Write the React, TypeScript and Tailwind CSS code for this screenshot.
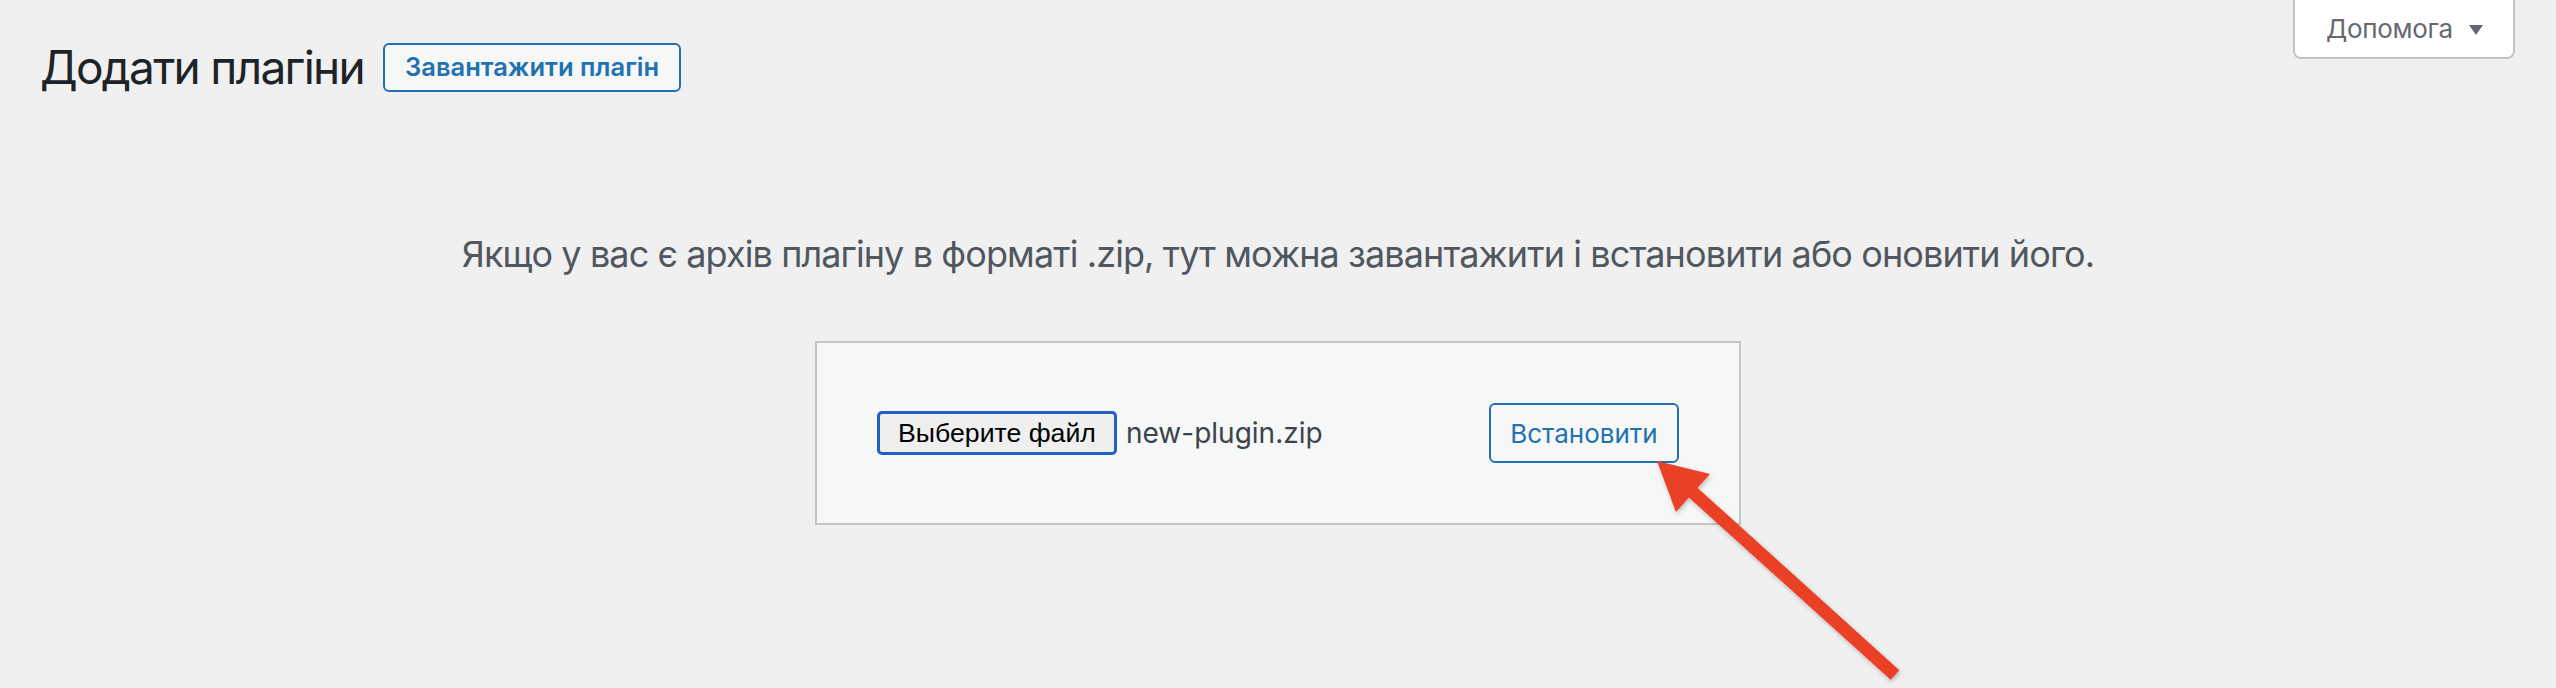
import React from "react";

export default function App() {
  return (
    <div
      className="relative min-h-[688px] w-full overflow-hidden bg-[#f0f0f1]"
      style={{ fontFamily: "Inter, 'Noto Sans', sans-serif" }}
    >
      <div className="flex items-start justify-between">
        <div className="flex items-center gap-[19px] pl-[40px] pt-[43px]">
          <h1 className="text-[46px] leading-[49px] font-normal tracking-[-0.037em] text-[#1d2327]">Додати плагіни</h1>
          <button className="flex h-[49px] w-[298px] items-center justify-center rounded-[6px] border-2 border-[#2271b1] bg-[#f6f7f7] text-[25.5px] font-semibold text-[#2271b1]">
            Завантажити плагін
          </button>
        </div>
        <button className="mr-[41px] flex h-[59px] w-[222px] items-center rounded-b-[8px] border-2 border-t-0 border-[#c3c4c7] bg-white pl-[31px] text-[26px] tracking-[-0.012em] text-[#646970]">
          <span>Допомога</span>
          <svg width="14" height="10" viewBox="0 0 14 10" className="ml-[16px] mt-[2px]">
            <path d="M0 0 H14 L7 10 Z" fill="#646970" />
          </svg>
        </button>
      </div>

      <p className="mt-[137px] text-center text-[36px] leading-[50px] tracking-[-0.025em] text-[#50575e]">
        Якщо у вас є архів плагіну в форматі .zip, тут можна завантажити і встановити або оновити його.
      </p>

      <div className="mt-[62px] flex justify-center">
        <div className="flex h-[184px] w-[926px] items-center justify-between border-2 border-[#c3c4c7] bg-[#f6f7f7] px-[60px]">
          <div className="flex items-center">
            <span
              className="flex h-[44px] w-[240px] items-center justify-center rounded-[5px] border-[3px] border-[#2260c8] bg-[#efefef] text-[26.67px] text-black"
              style={{ fontFamily: "'Liberation Sans', Arial, sans-serif" }}
            >
              Выберите файл
            </span>
            <span className="ml-[9px] text-[28px] text-[#3c434a]">new-plugin.zip</span>
          </div>
          <button className="flex h-[60px] w-[190px] items-center justify-center rounded-[6px] border-2 border-[#2271b1] bg-[#f6f7f7] text-[26px] text-[#2271b1]">
            Встановити
          </button>
        </div>
      </div>

      <svg
        className="pointer-events-none absolute left-0 top-0"
        width="2556"
        height="688"
        viewBox="0 0 2556 688"
      >
        <defs>
          <filter id="sh" x="-20%" y="-20%" width="140%" height="140%">
            <feDropShadow dx="1" dy="2" stdDeviation="2" floodColor="#000" floodOpacity="0.25" />
          </filter>
        </defs>
        <g filter="url(#sh)" fill="#ea4128" stroke="none">
          <line x1="1688" y1="488" x2="1895" y2="675" stroke="#ea4128" strokeWidth="13" />
          <polygon points="1657,461 1710,474 1676,512" />
        </g>
      </svg>
    </div>
  );
}
